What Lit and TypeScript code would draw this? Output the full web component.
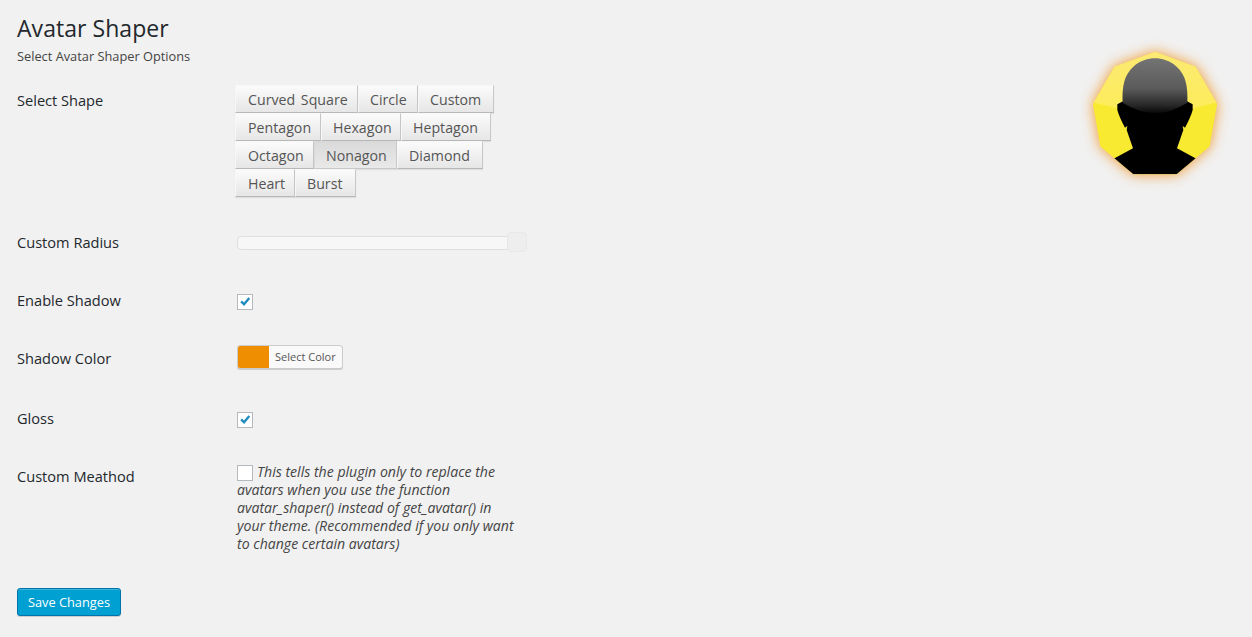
import { LitElement, html, css, svg } from "lit";
import { customElement } from "lit/decorators.js";

const SHAPES: [string, number][][] = [
  [["Curved Square", 123], ["Circle", 60], ["Custom", 76]],
  [["Pentagon", 86], ["Hexagon", 80], ["Heptagon", 90]],
  [["Octagon", 79], ["Nonagon", 83], ["Diamond", 86]],
  [["Heart", 60], ["Burst", 61]],
];

const nonagon = Array.from({ length: 9 }, (_, k) => {
  const a = (k * 40 * Math.PI) / 180;
  return `${(225 + 189 * Math.sin(a)).toFixed(1)},${(225 - 189 * Math.cos(a)).toFixed(1)}`;
}).join(" ");

const check = svg`<svg class="tick" viewBox="0 0 16 16"><path d="M2.6 8.2 L4.6 6.3 L6.8 8.6 L11.9 2.6 L13.9 4.2 L7 12.6 Z" fill="#1e8cbe"/></svg>`;

@customElement("app-root")
export class AppRoot extends LitElement {
  static styles = css`
    :host {
      display: flex;
      justify-content: space-between;
      align-items: flex-start;
      width: 1252px;
      height: 637px;
      overflow: hidden;
      background: #f1f1f1;
      color: #444;
      font-family: "Open Sans", sans-serif;
      font-size: 14px;
    }
    .main { padding: 14px 0 0 17px; width: 520px; box-sizing: border-box; }
    h1 { margin: 0; font-size: 23px; line-height: 29px; font-weight: 400; color: #23282d; letter-spacing: 0.05px; }
    .sub { margin: 4px 0 0; font-size: 12.8px; line-height: 18px; color: #444; }
    .row { display: flex; }
    .label {
      width: 220px; flex: none; font-size: 14.6px; font-weight: 400; line-height: 18px; color: #23282d;
    }
    .shapes { margin: 20px 0 0; }
    .shapes .label { padding-top: 6px; }
    .group { display: flex; flex-direction: column; margin-left: -2px; }
    .line { display: flex; height: 28px; }
    .seg {
      box-sizing: border-box; height: 28px; padding-left: 11px; line-height: 27px; word-spacing: 2px;
      font-size: 14.2px; color: #555; border: 1px solid #f7f7f7; border-bottom: 1px solid #b8b8b8;
      border-right: 1px solid #c8c8c8; box-shadow: 0 1px 1px rgba(0,0,0,.08);
      background: linear-gradient(#fbfbfb, #e6e6e6); white-space: nowrap;
    }
    .seg:first-child { padding-left: 12px; }
    .seg.on { background: linear-gradient(#dadada, #e9e9e9); border-color: #d8d8d8 #ccc #c8c8c8 #d8d8d8; }
    .radius { margin-top: 35px; height: 20px; }
    .radius .label { padding-top: 1px; }
    .slider { position: relative; width: 290px; height: 20px; }
    .track {
      box-sizing: border-box; height: 14px; margin-top: 4px; width: 275px;
      background: #f7f7f7; border: 1px solid #dedede; border-radius: 4px;
    }
    .handle {
      position: absolute; left: 270px; top: 0; width: 20px; height: 20px; box-sizing: border-box;
      background: #eeeeee; border: 1px solid #e8e8e8; border-radius: 4px;
    }
    .shadow { margin-top: 39px; }
    .box {
      box-sizing: border-box; width: 16px; height: 16px; background: #fff; border: 1px solid #b4b9be;
      flex: none; display: block;
    }
    .shadow > .box, .gloss > .box { margin-top: 3px; }
    .tick { display: block; width: 14px; height: 14px; }
    .color { margin-top: 35px; height: 24px; }
    .color .label { padding-top: 4px; }
    .picker {
      display: flex; box-sizing: border-box; width: 106px; height: 24px; background: #f9f9f9;
      border: 1px solid #ccc; border-radius: 3px; box-shadow: 0 1px 0 #ccc; overflow: hidden;
    }
    .swatch { width: 31px; background: #ef8e00; }
    .picker span { padding-left: 6px; font-size: 11px; line-height: 22px; color: #555; }
    .gloss { margin-top: 40px; }
    .method { margin-top: 35px; }
    .method .label { padding-top: 4px; }
    .desc { width: 284px; font-style: italic; line-height: 18px; color: #444; font-size: 14.1px; }
    .desc .box { display: inline-block; vertical-align: -4px; margin-right: 4px; }
    .save {
      display: block; box-sizing: border-box; width: 104px; height: 28px; margin: 35px 0 0;
      padding: 0; background: #00a0d2; border: 1px solid #0073aa; border-radius: 3px;
      box-shadow: inset 0 1px 0 rgba(120,200,230,.5), 0 1px 0 rgba(0,0,0,.15);
      color: #fff; font: 12.8px/26px "Open Sans", sans-serif;
    }
    .avatar { display: block; width: 150px; height: 150px; margin: 40px 22px 0 0; overflow: visible; filter: drop-shadow(0 0 7px rgba(240,145,30,.95)); }
  `;

  render() {
    return html`
      <div class="main">
        <h1>Avatar Shaper</h1>
        <p class="sub">Select Avatar Shaper Options</p>
        <div class="row shapes">
          <div class="label">Select Shape</div>
          <div class="group">
            ${SHAPES.map(
              (l) => html`<div class="line">
                ${l.map(([s, w]) => html`<div class="seg ${s === "Nonagon" ? "on" : ""}" style="width:${w}px">${s}</div>`)}
              </div>`
            )}
          </div>
        </div>
        <div class="row radius">
          <div class="label">Custom Radius</div>
          <div class="slider"><div class="track"></div><div class="handle"></div></div>
        </div>
        <div class="row shadow">
          <div class="label">Enable Shadow</div>
          <span class="box">${check}</span>
        </div>
        <div class="row color">
          <div class="label">Shadow Color</div>
          <div class="picker"><div class="swatch"></div><span>Select Color</span></div>
        </div>
        <div class="row gloss">
          <div class="label">Gloss</div>
          <span class="box">${check}</span>
        </div>
        <div class="row method">
          <div class="label">Custom Meathod</div>
          <div class="desc"><span class="box"></span>This tells the plugin only to replace the avatars when you use the function avatar_shaper() instead of get_avatar() in your theme. (Recommended if you only want to change certain avatars)</div>
        </div>
        <button class="save">Save Changes</button>
      </div>
      <svg class="avatar" viewBox="0 0 450 450">
        <defs>
          <clipPath id="nona"><polygon points="${nonagon}"/></clipPath>
          <linearGradient id="dome" gradientUnits="userSpaceOnUse" x1="0" y1="55" x2="0" y2="222">
            <stop offset="0" stop-color="#747474"/><stop offset=".55" stop-color="#5a5a5a"/><stop offset=".85" stop-color="#262626"/><stop offset="1" stop-color="#050505"/>
          </linearGradient>
          <linearGradient id="shine" x1="0" y1="0" x2="0" y2="1">
            <stop offset="0" stop-color="#fbe97a"/><stop offset="1" stop-color="#fdec58"/>
          </linearGradient>
        </defs>
        <polygon points="${nonagon}" fill="#f8ea30"/>
        <g clip-path="url(#nona)">
          <path d="M0 0 H450 V178 L340 205 Q225 225 110 205 L0 178 Z" fill="url(#shine)"/>
          <path d="M112 193 L130 183 H320 L338 193 V210 Q332 232 315 263 L308 258 L310 270 L291 325 L352 358 L292 420 H158 L98 358 L159 325 L140 270 L142 258 L135 263 Q118 232 112 210 Z" fill="#000"/>
          <path d="M128 188 C126 140 132 105 160 80 C180 62 205 55 225 55 C245 55 270 62 290 80 C318 105 324 140 322 188 Q225 250 128 188 Z" fill="url(#dome)"/>
        </g>
      </svg>
    `;
  }
}
